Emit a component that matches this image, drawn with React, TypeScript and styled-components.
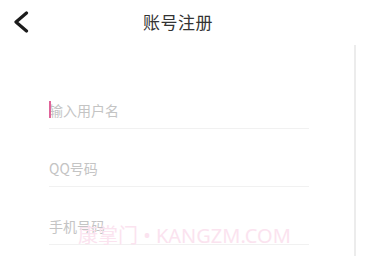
import styled, { createGlobalStyle } from "styled-components";

const GlobalStyle = createGlobalStyle`
    html, body {
        margin: 0;
        padding: 0;
        background: #ffffff;
        font-family: "Noto Sans CJK SC", "Noto Sans", sans-serif;
    }
`;

const fields = [
    { placeholder: '输入用户名', focused: true },
    { placeholder: 'QQ号码', focused: false },
    { placeholder: '手机号码', focused: false },
];

export default function App() {
    return (
        <Page>
            <GlobalStyle />
            <Header>
                <BackButton aria-label="返回">
                    <svg width="16" height="22" viewBox="0 0 16 22" fill="none">
                        <polyline points="13.5,2 3,11 13.5,20" stroke="#1c1c1c" strokeWidth="3.2" strokeLinecap="round" strokeLinejoin="round" />
                    </svg>
                </BackButton>
                <Title>账号注册</Title>
                <span />
            </Header>
            <Form>
                {fields.map((f, idx) => (
                    <Field key={idx}>
                        {f.focused && <Caret />}
                        <Input placeholder={f.placeholder} />
                    </Field>
                ))}
            </Form>
            <ScrollTrack />
            <Watermark>康掌门 • KANGZM.COM</Watermark>
        </Page>
    );
}

const Page = styled.div`
    position: relative;
    width: 369px;
    height: 256px;
    overflow: hidden;
    background: #fff;
`;

const Header = styled.div`
    display: grid;
    grid-template-columns: 50px 1fr 63px;
    align-items: center;
    height: 42px;
`;

const BackButton = styled.div`
    display: flex;
    padding-left: 13px;
    padding-top: 1px;
`;

const Title = styled.div`
    text-align: center;
    font-size: 17px;
    color: #333;
    letter-spacing: 0.5px;
`;

const Form = styled.div`
    display: flex;
    flex-direction: column;
    padding: 29px 0 0 49px;
    width: 260px;
`;

const Field = styled.div`
    position: relative;
    padding: 29px 0 8px;
    border-bottom: 1px solid #f1f1f1;
`;

const Input = styled.input`
    display: block;
    width: 100%;
    height: 20px;
    padding: 0;
    border: none;
    outline: none;
    background: transparent;
    font-family: "Noto Sans CJK SC", "Noto Sans", sans-serif;
    font-size: 14px;
    color: #333;
    &::placeholder {
        color: #c4c4c4;
    }
`;

const Caret = styled.span`
    position: absolute;
    left: 0;
    top: 30px;
    width: 2px;
    height: 17px;
    background: #e0649a;
`;

const ScrollTrack = styled.div`
    position: absolute;
    left: 354px;
    top: 45px;
    bottom: 0;
    width: 2px;
    background: #ececec;
`;

const Watermark = styled.div`
    position: absolute;
    left: 78px;
    top: 220px;
    font-family: "Noto Sans", "Noto Sans CJK SC", sans-serif;
    font-size: 20px;
    color: #fbe3ef;
    white-space: nowrap;
    pointer-events: none;
`;
